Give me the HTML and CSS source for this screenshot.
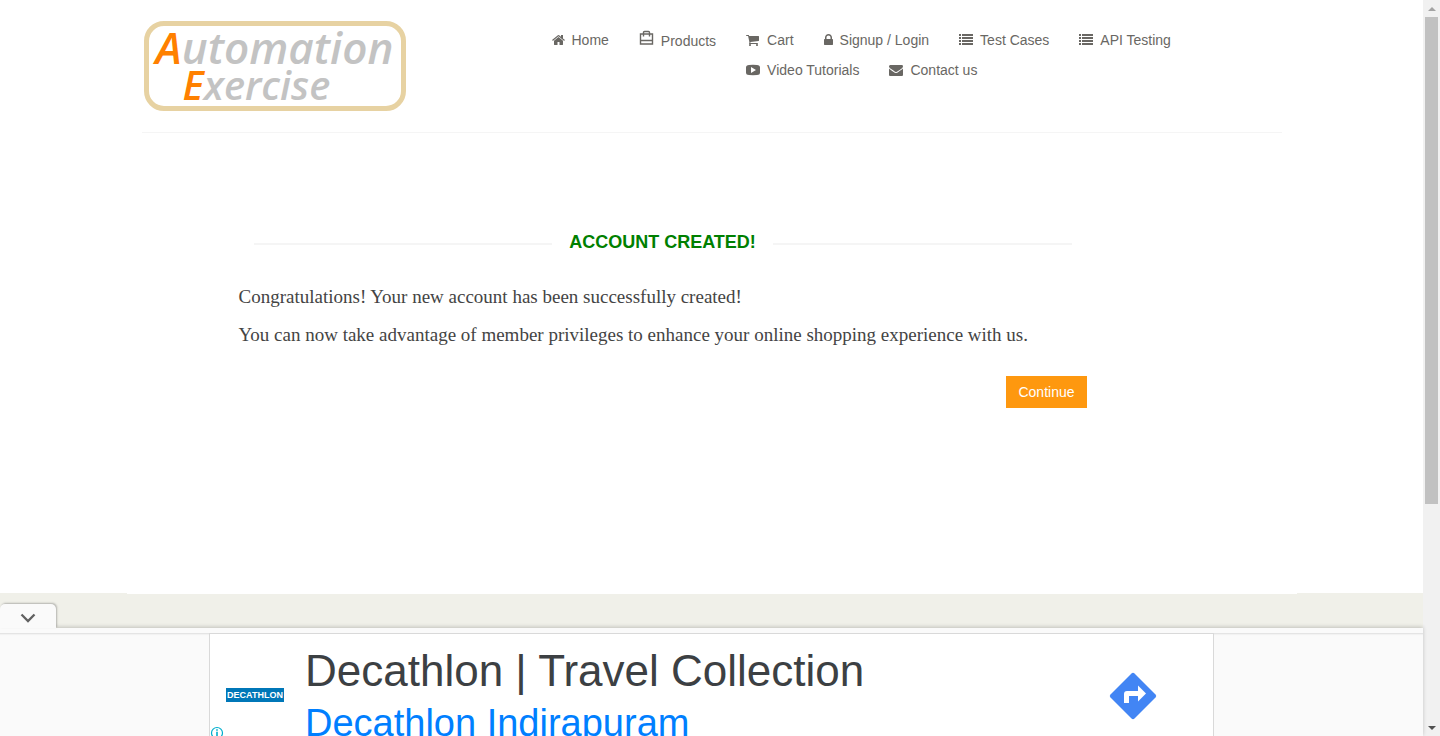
FILE: index.html
```html
<!DOCTYPE html>
<html lang="en">
<head>
<meta charset="utf-8">
<title>Automation Exercise - Account Created</title>
<link rel="stylesheet" href="styles.css">
</head>
<body>
<div class="page">
  <header class="header container">
    <div class="header-row">
      <a class="logo" href="#" aria-label="Automation Exercise">
        <span class="logo-line"><span class="logo-cap">A</span>utomation</span>
        <span class="logo-line logo-second"><span class="logo-cap">E</span>xercise</span>
      </a>
      <nav class="nav">
        <ul>
          <li><a href="#"><svg width="13" height="14" viewBox="64 0 1664 1792"><path d="M1472 992v480q0 26-19 45t-45 19h-384v-384h-256v384h-384q-26 0-45-19t-19-45v-480q0-1 .5-3t.5-3l575-474 575 474q1 2 1 6zm223-69l-62 74q-8 9-21 11h-3q-13 0-21-7l-692-577-692 577q-12 8-24 7-13-2-21-11l-62-74q-8-10-7-23.5t11-21.5l719-599q32-26 76-26t76 26l244 204v-195q0-14 9-23t23-9h192q14 0 23 9t9 23v408l219 182q10 8 11 21.5t-7 23.5z"/></svg>Home</a></li>
          <li class="products"><a href="#"><svg width="15" height="18" viewBox="0 0 15 18"><path fill="none" stroke="currentColor" stroke-width="1.400" d="M1.500 5h12v10h-12zM1.500 11.500h12M4.500 5V3.500q0-1 1-1h4q1 0 1 1V5M4.500 5v2.500M10.500 5v2.500"/></svg>Products</a></li>
          <li><a href="#"><svg width="14" height="14" viewBox="64 0 1792 1792"><path d="M704 1536q0 52-38 90t-90 38-90-38-38-90 38-90 90-38 90 38 38 90zm896 0q0 52-38 90t-90 38-90-38-38-90 38-90 90-38 90 38 38 90zm128-1088v512q0 24-16.500 42.500t-40.500 21.500l-1044 122q13 60 13 70 0 16-24 64h920q26 0 45 19t19 45-19 45-45 19h-1024q-26 0-45-19t-19-45q0-11 8-31.500t16-36 21.500-40 15.500-29.500l-177-823h-204q-26 0-45-19t-19-45 19-45 45-19h256q16 0 28.500 6.500t19.500 15.500 13 24.500 8 26 5.500 29.500 4.500 26h1201q26 0 45 19t19 45z"/></svg>Cart</a></li>
          <li><a href="#"><svg width="9" height="14" viewBox="320 0 1152 1792"><path d="M640 768h512v-192q0-106-75-181t-181-75-181 75-75 181v192zm832 96v576q0 40-28 68t-68 28h-960q-40 0-68-28t-28-68v-576q0-40 28-68t68-28h32v-192q0-184 132-316t316-132 316 132 132 316v192h32q40 0 68 28t28 68z"/></svg>Signup / Login</a></li>
          <li><a href="#"><svg width="14" height="14" viewBox="0 0 14 14"><path d="M0 1h2v2H0zM3 1h11v2H3zM0 4h2v2H0zM3 4h11v2H3zM0 7h2v2H0zM3 7h11v2H3zM0 10h2v2H0zM3 10h11v2H3z"/></svg>Test Cases</a></li>
          <li><a href="#"><svg width="14" height="14" viewBox="0 0 14 14"><path d="M0 1h2v2H0zM3 1h11v2H3zM0 4h2v2H0zM3 4h11v2H3zM0 7h2v2H0zM3 7h11v2H3zM0 10h2v2H0zM3 10h11v2H3z"/></svg>API Testing</a></li>
          <li><a href="#"><svg width="14" height="14" viewBox="0 0 14 14"><path fill-rule="evenodd" d="M3 2Q7 1.700 11 2q3 0 3 2.500v5Q14 12 11 12q-4 .300-8 0Q0 12 0 9.500v-5Q0 2 3 2zM5 4v6l5-3z"/></svg>Video Tutorials</a></li>
          <li><a href="#"><svg width="14" height="14" viewBox="0 0 1792 1792"><path d="M1792 710v794q0 66-47 113t-113 47h-1472q-66 0-113-47t-47-113v-794q44 49 101 87 362 246 497 345 57 42 92.500 65.500t94.500 48 110 24.500h2q51 0 110-24.500t94.500-48 92.500-65.500q170-123 498-345 57-39 100-87zm0-294q0 79-49 151t-122 123q-376 261-468 325-10 7-42.500 31t-54 38.500-52 32.500-57.500 27-50 9h-2q-23 0-50-9t-57.500-27-52-32.500-54-38.500-42.500-31q-91-64-262-182.500t-205-142.500q-62-42-117-115.500t-55-136.500q0-78 41.500-130t118.500-52h1472q65 0 112.500 47t47.500 113z"/></svg>Contact us</a></li>
        </ul>
      </nav>
    </div>
  </header>

  <main class="container">
    <section class="message">
      <h2 class="title">Account Created!</h2>
      <p>Congratulations! Your new account has been successfully created!</p>
      <p>You can now take advantage of member privileges to enhance your online shopping experience with us.</p>
      <div class="actions"><a class="button" href="#">Continue</a></div>
    </section>
  </main>

  <footer class="footer"><div class="footer-edge"></div></footer>

  <aside class="ad" aria-label="Advertisement">
    <button class="ad-toggle" type="button" aria-label="Hide advertisement">
      <svg width="16" height="10" viewBox="0 0 16 10"><path fill="none" stroke="#616161" stroke-width="2.300" d="M1.500 1.500L8 8l6.500-6.500"/></svg>
    </button>
    <div class="ad-body">
      <div class="ad-card">
        <span class="ad-brand">DECATHLON</span>
        <div class="ad-copy">
          <a class="ad-title" href="#">Decathlon | Travel Collection</a>
          <a class="ad-place" href="#">Decathlon Indirapuram</a>
        </div>
        <a class="ad-directions" href="#" aria-label="Directions"><svg width="48" height="48" viewBox="0 0 48 48"><path fill="#4285f4" d="M22.500 1.500q1.500-1.500 3 0l21 21q1.500 1.500 0 3l-21 21q-1.500 1.500-3 0l-21-21q-1.500-1.500 0-3z"/><path fill="#fff" d="M15 31V22q0-3 3-3h11v-5.500l8 8-8 8V24h-9v7z"/></svg></a>
        <a class="ad-info" href="#" aria-label="Ad information"><svg width="14" height="14" viewBox="0 0 14 14"><circle cx="7" cy="7" r="5.500" fill="none" stroke="#00aecd" stroke-width="1.200"/><path fill="#00aecd" d="M6.200 3.200h1.600v1.500H6.200zM6.200 5.700h1.600v5H6.200z"/></svg></a>
      </div>
    </div>
  </aside>
</div>
<div class="scrollbar" aria-hidden="true">
  <span class="arrow arrow-up"></span>
  <span class="thumb"></span>
  <span class="arrow arrow-down"></span>
</div>
</body>
</html>
```
FILE: styles.css
```css
* { box-sizing: border-box; }
body {
  margin: 0;
  height: 100vh;
  display: flex;
  overflow: hidden;
  background: #fff;
  color: #696763;
  font: 14px/20px "Liberation Sans", Arial, sans-serif;
}
a { color: inherit; text-decoration: none; }
.page {
  flex: 1;
  min-width: 0;
  display: flex;
  flex-direction: column;
}
.container {
  width: 100%;
  max-width: 1170px;
  margin: 0 auto;
  padding: 0 15px;
}

/* Header */
.header-row {
  display: flex;
  align-items: flex-start;
  gap: 131px;
  padding: 21px 0 21px 2px;
  border-bottom: 1px solid #f5f5f5;
}
.logo {
  flex: none;
  width: 262px;
  height: 90px;
  padding: 2px 0 0 7px;
  border: 5px solid #e7d2a2;
  border-radius: 20px;
  color: #c3c3c3;
  font: italic 600 44px/38px "Open Sans", sans-serif;
}
.logo-line { display: block; white-space: nowrap; }
.logo-second { padding-left: 27px; font-size: 40px; }
.logo-cap { color: #ff8000; }
.nav { flex: 1; }
.nav ul {
  margin: 0;
  padding: 4px 0 0;
  list-style: none;
}
.nav li {
  float: left;
  height: 30px;
  padding: 5px 15px;
}
.nav li.products { height: 31px; padding-top: 6px; }
.nav a {
  display: flex;
  align-items: center;
  gap: 7px;
  height: 20px;
  white-space: nowrap;
}
.nav svg { fill: currentColor; }
.products svg { margin-bottom: 6px; }

/* Confirmation */
.message {
  max-width: 848px;
  margin-left: 97px;
  padding: 98px 0 185px;
}
.title {
  display: flex;
  align-items: center;
  gap: 17px;
  margin: 0 15px 30px;
  color: green;
  font-size: 18px;
  line-height: 22px;
  text-transform: uppercase;
}
.title::before,
.title::after {
  content: "";
  flex: 1;
  height: 2px;
  margin-top: 4px;
  background: #f5f5f5;
}
.message p {
  margin: 0 0 10px;
  color: #444;
  font: 19px/28px "Liberation Serif", Garamond, serif;
  white-space: nowrap;
}
.actions {
  display: flex;
  justify-content: flex-end;
  padding-top: 17px;
}
.button {
  padding: 6px 12px;
  background: #fe980f;
  color: #fff;
}

/* Footer and anchored advertisement */
.footer { flex: 1; background: #f0f0e9; }
.footer-edge {
  max-width: 1170px;
  height: 1px;
  margin: 0 auto;
  background: #fff;
}
.ad {
  position: relative;
  flex: none;
  height: 108px;
  padding-top: 5px;
  background: #fafafa;
  box-shadow: 0 -1px 4px rgba(0, 0, 0, .2);
}
.ad-toggle {
  position: absolute;
  left: 0;
  bottom: 100%;
  width: 56px;
  height: 24px;
  padding: 4px 0 0;
  border: 0;
  border-radius: 5px 5px 0 0;
  background: #fafafa;
  box-shadow: 1px -1px 2px rgba(0, 0, 0, .25);
}
.ad-toggle svg { display: block; margin: 0 auto; }
.ad-body {
  height: 103px;
  overflow: hidden;
  box-shadow: inset 0 3px 2px -2px rgba(0, 0, 0, .12);
}
.ad-card {
  position: relative;
  display: flex;
  align-items: flex-start;
  max-width: 1005px;
  height: 124px;
  margin: 0 auto;
  padding: 0 56px 0 16px;
  border: 1px solid #d9d9d9;
  background: #fff;
}
.ad-brand {
  width: 58px;
  margin-top: 54px;
  background: #0077b8;
  color: #fff;
  font: 700 9px/14px "Liberation Sans", Arial, sans-serif;
  text-align: center;
}
.ad-copy {
  flex: 1;
  padding: 10px 0 0 21px;
  white-space: nowrap;
}
.ad-copy a { display: block; }
.ad-title { color: #3c4043; font-size: 44px; line-height: 54px; }
.ad-place { color: #007fff; font-size: 38px; line-height: 50px; }
.ad-directions { margin-top: 38px; }
.ad-directions svg { display: block; }
.ad-info { position: absolute; left: 0; top: 91px; }

/* Scrollbar */
.scrollbar {
  flex: none;
  width: 17px;
  display: flex;
  flex-direction: column;
  align-items: center;
  background: #f1f1f1;
}
.thumb { width: 13px; height: 66.2%; background: #c1c1c1; }
.arrow { width: 17px; height: 17px; display: grid; place-items: center; }
.arrow::before {
  content: "";
  border: 4px solid transparent;
  border-top-width: 0;
  border-bottom-color: #a3a3a3;
}
.arrow-down { margin-top: auto; }
.arrow-down::before {
  border-top: 4px solid #505050;
  border-bottom-width: 0;
}
```
